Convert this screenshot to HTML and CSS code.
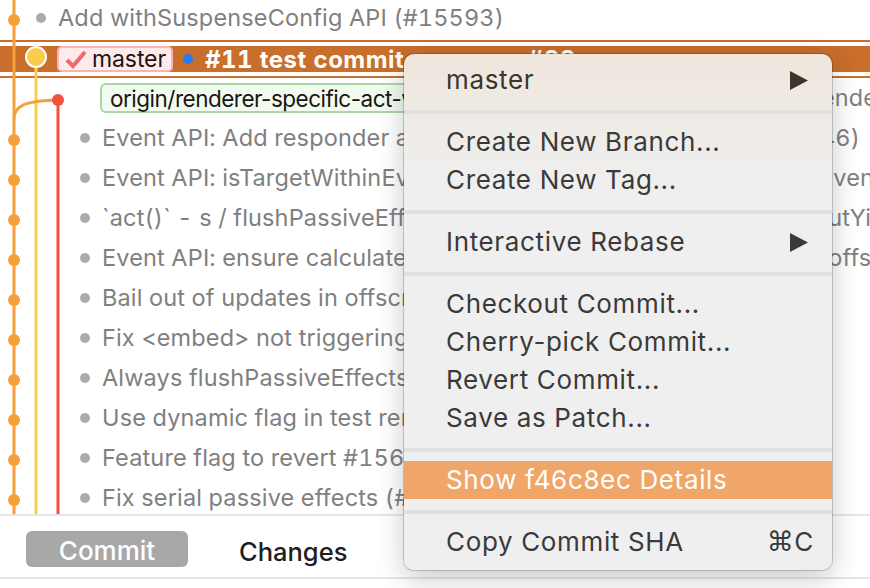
FILE: index.html
```html
<!DOCTYPE html>
<html lang="en">
<head>
  <meta charset="UTF-8">
  <title>Commit history</title>
  <link rel="stylesheet" href="styles.css">
</head>
<body>

<div class="history">
  <div class="rows">
    <div class="row row-main"><span class="dot"></span><span class="msg">Add withSuspenseConfig API (#15593)</span></div>
    <div class="row row-selected">
      <div class="band">
        <span class="tag tag-local">
          <svg class="check" viewBox="0 0 22 20" width="22" height="20"><path d="M2 11 L8 17 L20 3" fill="none" stroke="#ee6a6f" stroke-width="4"/></svg>
          master
        </span>
        <span class="blue-dot"></span>
        <span class="msg-bold">#11 test commit message #88</span>
      </div>
    </div>
    <div class="row row-branch row-tagged"><span class="tag tag-remote">origin/renderer-specific-act-warning</span><span class="msg"></span><span class="tail">i render</span></div>
    <div class="row row-branch"><span class="dot"></span><span class="msg">Event API: Add responder allowMultipleHostChildren</span><span class="tail tail-end">(#15646)</span></div>
    <div class="row row-branch"><span class="dot"></span><span class="msg">Event API: isTargetWithinEventComponent</span><span class="tail">s Event</span></div>
    <div class="row row-branch"><span class="dot"></span><span class="msg">`act()` - s / flushPassiveEffects / Scheduler.unstable_flushAll</span><span class="tail">houtYield</span></div>
    <div class="row row-branch"><span class="dot"></span><span class="msg">Event API: ensure calculateResponderRegion</span><span class="tail">to offscreen</span></div>
    <div class="row row-branch"><span class="dot"></span><span class="msg">Bail out of updates in offscreen trees</span></div>
    <div class="row row-branch"><span class="dot"></span><span class="msg">Fix &lt;embed&gt; not triggering onLoad</span></div>
    <div class="row row-branch"><span class="dot"></span><span class="msg">Always flushPassiveEffects before commit</span></div>
    <div class="row row-branch"><span class="dot"></span><span class="msg">Use dynamic flag in test renderer</span></div>
    <div class="row row-branch"><span class="dot"></span><span class="msg">Feature flag to revert #15650</span></div>
    <div class="row row-branch"><span class="dot"></span><span class="msg">Fix serial passive effects (#15650)</span></div>
  </div>

  <!-- branch lines drawn over the rows -->
  <svg class="graph" width="70" height="514" viewBox="0 0 70 514">
    <line x1="14" y1="0" x2="14" y2="514" stroke="#f5a03c" stroke-width="3"/>
    <line x1="36" y1="57" x2="36" y2="514" stroke="#fbcb4c" stroke-width="3"/>
    <line x1="58" y1="100" x2="58" y2="514" stroke="#f1523f" stroke-width="3"/>
    <path d="M14 119 C14 105 26 101 58 100" fill="none" stroke="#f5a03c" stroke-width="3"/>
    <g fill="#f5a03c">
      <circle cx="14" cy="20" r="6"/>
      <circle cx="14" cy="140" r="6"/>
      <circle cx="14" cy="180" r="6"/>
      <circle cx="14" cy="220" r="6"/>
      <circle cx="14" cy="260" r="6"/>
      <circle cx="14" cy="300" r="6"/>
      <circle cx="14" cy="340" r="6"/>
      <circle cx="14" cy="380" r="6"/>
      <circle cx="14" cy="420" r="6"/>
      <circle cx="14" cy="460" r="6"/>
      <circle cx="14" cy="500" r="6"/>
    </g>
    <circle cx="58" cy="100" r="6" fill="#f1523f"/>
    <circle cx="36" cy="57" r="10" fill="#fbcb4c" stroke="#fff" stroke-width="2"/>
  </svg>
</div>

<div class="footer">
  <button class="btn-commit">Commit</button>
  <span class="tab-changes">Changes</span>
</div>

<div class="menu">
  <div class="item item-first">master<svg class="arrow" viewBox="0 0 18 19" width="18" height="19"><polygon points="0,0 18,9.5 0,19" fill="#3a362c"/></svg></div>
  <div class="sep"></div>
  <div class="item">Create New Branch...</div>
  <div class="item">Create New Tag...</div>
  <div class="sep"></div>
  <div class="item">Interactive Rebase<svg class="arrow" viewBox="0 0 18 19" width="18" height="19"><polygon points="0,0 18,9.5 0,19" fill="#3a3a3a"/></svg></div>
  <div class="sep"></div>
  <div class="item">Checkout Commit...</div>
  <div class="item">Cherry-pick Commit...</div>
  <div class="item">Revert Commit...</div>
  <div class="item">Save as Patch...</div>
  <div class="sep"></div>
  <div class="item item-active">Show f46c8ec Details</div>
  <div class="sep"></div>
  <div class="item">Copy Commit SHA<span class="shortcut"><span class="cmd">⌘</span>C</span></div>
</div>

</body>
</html>
```

FILE: styles.css
```css
body {
  margin: 0;
  width: 870px;
  height: 588px;
  overflow: hidden;
  position: relative;
  background-color: #fff;
  font-family: Inter, "Liberation Sans", sans-serif;
  font-size: 23.5px;
  letter-spacing: 0.15px;
  color: #808080;
}
.history {
  position: relative;
  height: 514px;
  overflow: hidden;
}
.rows {
  margin-top: -2px;
}
.row {
  display: flex;
  align-items: center;
  height: 40px;
  white-space: nowrap;
}
.row-main {
  padding-left: 36px;
}
.row-branch {
  padding-left: 80px;
}
.row-tagged {
  padding-left: 100px;
}
.dot {
  flex: none;
  width: 10px;
  height: 10px;
  margin-right: 12px;
  border-radius: 50%;
  background-color: #ababab;
}
.msg {
  flex: 1;
  min-width: 0;
  overflow: hidden;
  padding-bottom: 2px;
  font-variant-numeric: tabular-nums;
}
.tail {
  flex: none;
  width: 70px;
  overflow: hidden;
  padding-bottom: 2px;
  font-variant-numeric: tabular-nums;
}
.tail-end {
  display: flex;
  justify-content: flex-end;
  box-sizing: border-box;
  padding-right: 10px;
}
.row-selected {
  display: block;
  padding-top: 2px;
  box-sizing: border-box;
}
.band {
  display: flex;
  align-items: center;
  height: 38px;
  box-sizing: border-box;
  padding: 4px 0;
  border-top: 2px solid #c96e2b;
  border-bottom: 2px solid #c96e2b;
  background: #c96e2b content-box;
}
.tag {
  display: flex;
  align-items: center;
  box-sizing: border-box;
  color: #1c1414;
}
.tag-local {
  height: 26px;
  margin-left: 57px;
  padding: 0 5px 0 6px;
  border: 2px solid #f7b4b8;
  border-radius: 5px;
  background-color: #fdeaeb;
  font-size: 23px;
  letter-spacing: -0.1px;
}
.check {
  margin-right: 5px;
}
.tag-remote {
  flex: none;
  height: 30px;
  padding: 0 8px;
  border: 2px solid #a8d9a2;
  border-radius: 6px;
  background-color: #f1fbf0;
  font-size: 22.5px;
  letter-spacing: -0.5px;
}
.blue-dot {
  flex: none;
  width: 10px;
  height: 10px;
  margin: 0 12px 0 10px;
  border-radius: 50%;
  background-color: #2a78f5;
}
.msg-bold {
  color: #fff;
  font-size: 24px;
  font-weight: 700;
  letter-spacing: 0.45px;
  font-variant-numeric: tabular-nums;
}
.graph {
  position: absolute;
  top: 0;
  left: 0;
}
.footer {
  display: flex;
  align-items: center;
  box-sizing: border-box;
  height: 65px;
  padding: 5px 0 0 26px;
  border-top: 2px solid #e6e6e6;
  border-bottom: 2px solid #e6e6e6;
}
.btn-commit {
  width: 162px;
  height: 36px;
  padding: 2px 0 0;
  border: none;
  border-radius: 6px;
  background-color: #a8a8a8;
  color: #fff;
  font: 500 26px Inter, "Liberation Sans", sans-serif;
}
.tab-changes {
  margin-left: 51px;
  padding-top: 4px;
  color: #1e1e1e;
  font-size: 25.5px;
  font-weight: 500;
  letter-spacing: 0;
}
.menu {
  position: absolute;
  top: 54px;
  left: 404px;
  width: 428px;
  height: 516px;
  box-sizing: border-box;
  padding: 7px 0 9px;
  border-radius: 10px;
  background: linear-gradient(#efe6dc 0, #efeae4 50px, #efefef 130px);
  box-shadow: 0 0 0 1px rgba(0, 0, 0, 0.18), 0 8px 28px rgba(0, 0, 0, 0.22);
  color: #3a3a3a;
  font-size: 26px;
  letter-spacing: 0.65px;
}
.item {
  display: flex;
  align-items: center;
  justify-content: space-between;
  box-sizing: border-box;
  height: 38px;
  padding: 0 18px 1px 42px;
  white-space: nowrap;
}
.item-first {
  color: #3a362c;
}
.item-active {
  background-color: #f0a569;
  color: #fff;
}
.arrow {
  margin: 1px 6px 0 0;
}
.shortcut {
  display: flex;
  align-items: center;
}
.cmd {
  font-family: "DejaVu Sans", sans-serif;
  font-size: 27px;
}
.sep {
  height: 4px;
  margin: 11px 0 9px;
  background-color: #e0e0e0;
}
```
